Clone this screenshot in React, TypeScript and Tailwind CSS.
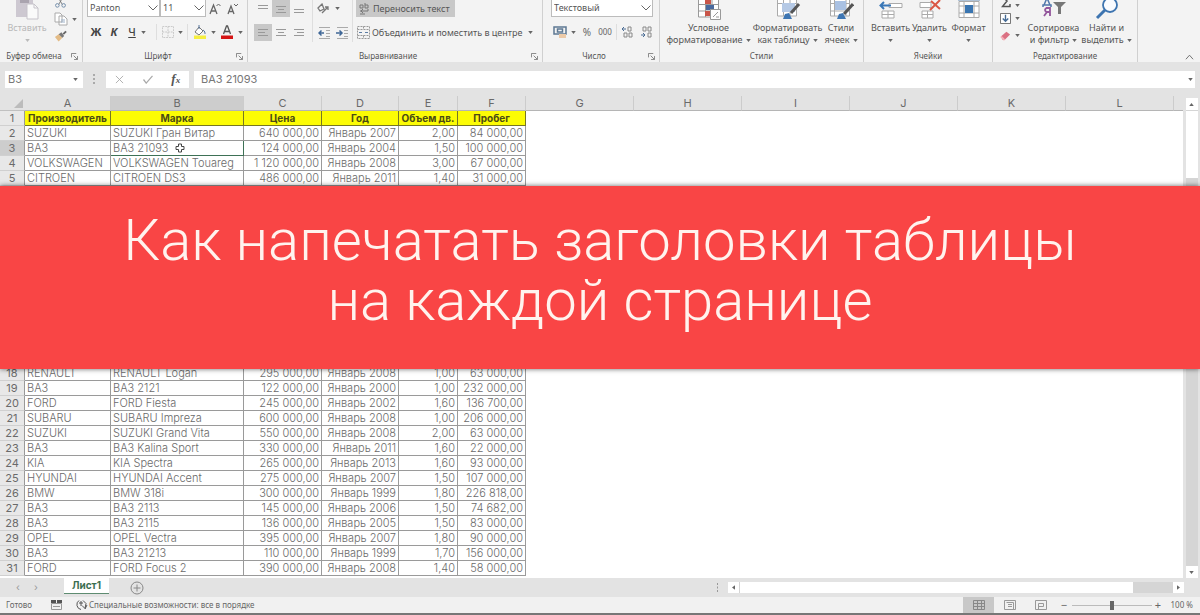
import React from "react";

type Children = { children?: React.ReactNode };

const rows: Record<number, string[]> = {
  2: ["SUZUKI", "SUZUKI Гран Витар", "640 000,00", "Январь 2007", "2,00", "84 000,00"],
  3: ["ВАЗ", "ВАЗ 21093", "124 000,00", "Январь 2004", "1,50", "100 000,00"],
  4: ["VOLKSWAGEN", "VOLKSWAGEN Touareg", "1 120 000,00", "Январь 2008", "3,00", "67 000,00"],
  5: ["CITROEN", "CITROEN DS3", "486 000,00", "Январь 2011", "1,40", "31 000,00"],
  18: ["RENAULT", "RENAULT Logan", "295 000,00", "Январь 2008", "1,00", "63 000,00"],
  19: ["ВАЗ", "ВАЗ 2121", "122 000,00", "Январь 2000", "1,00", "232 000,00"],
  20: ["FORD", "FORD Fiesta", "245 000,00", "Январь 2002", "1,60", "136 700,00"],
  21: ["SUBARU", "SUBARU Impreza", "600 000,00", "Январь 2008", "1,00", "206 000,00"],
  22: ["SUZUKI", "SUZUKI Grand Vita", "550 000,00", "Январь 2008", "2,00", "63 000,00"],
  23: ["ВАЗ", "ВАЗ Kalina Sport", "330 000,00", "Январь 2011", "1,60", "22 000,00"],
  24: ["KIA", "KIA Spectra", "265 000,00", "Январь 2013", "1,60", "93 000,00"],
  25: ["HYUNDAI", "HYUNDAI Accent", "275 000,00", "Январь 2007", "1,50", "107 000,00"],
  26: ["BMW", "BMW 318i", "300 000,00", "Январь 1999", "1,80", "226 818,00"],
  27: ["ВАЗ", "ВАЗ 2113", "145 000,00", "Январь 2006", "1,50", "74 682,00"],
  28: ["ВАЗ", "ВАЗ 2115", "136 000,00", "Январь 2005", "1,50", "83 000,00"],
  29: ["OPEL", "OPEL Vectra", "395 000,00", "Январь 2007", "1,80", "90 000,00"],
  30: ["ВАЗ", "ВАЗ 21213", "110 000,00", "Январь 1999", "1,70", "156 000,00"],
  31: ["FORD", "FORD Focus 2", "390 000,00", "Январь 2008", "1,40", "58 000,00"],
};
const titles = ["Производитель", "Марка", "Цена", "Год", "Объем дв.", "Пробег"];
const letters = ["A", "B", "C", "D", "E", "F", "G", "H", "I", "J", "K", "L"];
const emptyRow = ["", "", "", "", "", ""];

const Caret = () => (
  <svg viewBox="0 0 6 4" className="inline-block h-[3px] w-[5px] shrink-0 fill-[#666]"><path d="M0 0h6L3 4z" /></svg>
);

const Divider = () => <span className="mx-[2px] h-4 w-px shrink-0 bg-[#dedede]" />;

function Group({ label, width, launcher, inset = "", children }: Children & { label: string; width: string; launcher?: boolean; inset?: string }) {
  return (
    <section className={`relative flex h-[62px] shrink-0 flex-col border-r border-[#d0d0d0] ${width}`} aria-label={label}>
      <div className={`flex h-[50px] ${inset}`}>{children}</div>
      <div className={`text-center text-[8px] leading-3 text-[#555] ${launcher ? "pr-[14px]" : ""}`}>{label}</div>
      {launcher && (
        <button aria-label={`${label}: параметры`} className="absolute right-1 bottom-[2px]">
          <svg viewBox="0 0 8 8" className="h-[7px] w-[7px] fill-none stroke-[#777]"><path d="M.5 5V.5H6M3 3l4 4M7.500 3.500v4h-4" /></svg>
        </button>
      )}
    </section>
  );
}

function Select({ label, value, width }: { label: string; value: string; width: string }) {
  return (
    <span className={`relative block ${width}`}>
      <select aria-label={label} defaultValue={value} className="block h-[17px] w-full appearance-none border border-t-0 border-[#bcbcbc] bg-white pl-[2px] text-[9px] leading-3 text-[#555] outline-none">
        <option>{value}</option>
      </select>
      <svg viewBox="0 0 10 6" className="pointer-events-none absolute top-[5px] right-[2px] h-[6px] w-[10px] fill-none stroke-[#666]"><path d="M.5.5 5 5 9.500.5" /></svg>
    </span>
  );
}

function Tool({ label, active, width = "w-[18px]", children }: Children & { label: string; active?: boolean; width?: string }) {
  return (
    <button aria-label={label} className={`flex h-[17px] shrink-0 items-center justify-center gap-1 ${width} ${active ? "bg-[#c8c8c8]" : ""}`}>
      {children}
    </button>
  );
}

function BigButton({ lines, width, icon }: { lines: string[]; width: string; icon: React.ReactNode }) {
  return (
    <button className={`flex shrink-0 flex-col items-center text-[9px] leading-3 whitespace-nowrap text-[#555] ${width}`}>
      <span className="mb-[2px] block h-5">{icon}</span>
      <span>{lines[0]}</span>
      <span className="flex items-center gap-[3px]">{lines[1]}<span className="flex h-3 items-center"><Caret /></span></span>
    </button>
  );
}

const Lines = ({ d }: { d: string }) => (
  <svg viewBox="0 0 12 10" className="h-[10px] w-3 fill-none stroke-[#999]"><path d={d} /></svg>
);

const Indent = ({ out }: { out?: boolean }) => (
  <svg viewBox="0 0 13 12" className="h-3 w-[13px] fill-none stroke-[#aaa]">
    <path d="M1 .5h11M8 3.500h4M8 6.500h4M8 9.500h4M1 11.500h11" />
    <path d={out ? "M1 6h5M3.500 3.500 1 6l2.500 2.500" : "M0 6h5M3.500 3.500 6 6 3.500 8.500"} className="stroke-[#3f6797]" strokeWidth="1.500" />
  </svg>
);

function Ribbon() {
  return (
    <header className="flex h-[62px] overflow-hidden bg-[#f3f3f3]">
      <Group label="Буфер обмена" width="w-[83px]" launcher>
        <button className="flex w-[54px] shrink-0 flex-col items-center text-[9px] leading-3 text-[#b8b8b8]">
          <svg viewBox="0 0 24 20" className="mb-[2px] h-5 w-6">
            <path d="M1 0h17v17H1z" fill="#cdc8d1" /><path d="M5 0h9v3H5z" fill="#aaa4af" />
            <path d="M12 4h7l4 4v11H12z" fill="#fafafa" stroke="#c6c3ca" /><path d="M19 4v4h4" fill="none" stroke="#c6c3ca" />
          </svg>
          <span>Вставить</span>
          <span className="flex h-3 items-center opacity-40"><Caret /></span>
        </button>
        <div className="flex w-6 shrink-0 flex-col">
          <button aria-label="Вырезать" className="h-[9px] w-[6px]">
            <svg viewBox="0 0 14 10" className="h-[9px] w-[13px] fill-none stroke-[#6b87a5]"><path d="m5-2 4 7M9-2 5 5" stroke="#777" /><circle cx="3.500" cy="6" r="2" /><circle cx="10.500" cy="6" r="2" /></svg>
          </button>
          <button aria-label="Копировать" className="flex h-5 w-6 items-center gap-1">
            <svg viewBox="0 0 14 14" className="h-[14px] w-[14px] fill-white stroke-[#aaa]"><path d="M1 1h5l2 2v7H1zM5 4h5l3 3v6H5z" /><path d="M7 8h4M7 10h4" stroke="#9bb0c8" /></svg><Caret />
          </button>
          <button aria-label="Формат по образцу" className="h-[14px] w-4">
            <svg viewBox="0 0 14 12" className="h-3 w-[13px]"><path d="m1 7 4-3 4 4-4 4z" fill="#e3bb86" /><path d="m5 4 3-2 3 4-2 2z" fill="#777" /><path d="m10 4 3-3" stroke="#666" strokeWidth="2" /></svg>
          </button>
        </div>
      </Group>

      <Group label="Шрифт" width="w-[165px]" launcher>
        <div className="flex w-full flex-col gap-2 pl-1">
          <div className="flex h-4 items-start">
            <Select label="Шрифт" value="Panton" width="w-[73px]" />
            <Select label="Размер шрифта" value="11" width="w-[46px]" />
            <Tool label="Увеличить размер">
              <svg viewBox="0 0 12 12" className="h-3 w-3 fill-none stroke-[#666]"><path d="m1 11 3.500-9L8 11M2.500 8h4" strokeWidth="1.300" /><path d="m7.500 3 2-2 2 2" /></svg>
            </Tool>
            <Tool label="Уменьшить размер">
              <svg viewBox="0 0 12 12" className="h-3 w-3 fill-none stroke-[#666]"><path d="m1 11 3-8 3 8M2.500 8.500h3" strokeWidth="1.300" /><path d="m7 1 2 2 2-2" /></svg>
            </Tool>
          </div>
          <div className="flex h-4 items-center text-[11px] font-bold text-[#444]">
            <Tool label="Полужирный">Ж</Tool>
            <Tool label="Курсив"><i>К</i></Tool>
            <Tool label="Подчеркнутый"><span className="font-medium underline">Ч</span></Tool>
            <Caret />
            <span className="w-2" />
            <Divider />
            <Tool label="Границы" width="w-[26px]">
              <svg viewBox="0 0 13 13" className="h-3 w-3 fill-none stroke-[#c4c4c4]"><path d="M.5.5h12v12H.5zM6.500.5v12M.5 6.500h12" strokeDasharray="2 1" /></svg><Caret />
            </Tool>
            <Divider />
            <Tool label="Цвет заливки" width="w-[28px]">
              <svg viewBox="0 0 14 14" className="h-[14px] w-[14px]"><path d="M1 10.500h12V14H1z" fill="#f6ef40" /><path d="m6 2 4 4-4 4-4-3z" fill="#fff" stroke="#777" /><path d="M6 4V0M10 5c2 1 2 3 2 4" fill="none" stroke="#56759c" /></svg><Caret />
            </Tool>
            <Tool label="Цвет шрифта" width="w-[27px]">
              <svg viewBox="0 0 14 14" className="h-[14px] w-[14px]"><path d="M1 10.500h12V14H1z" fill="#d51515" /><path d="m3.500 9 3-8h1l3 8M4.500 6.500h5" fill="none" stroke="#555" strokeWidth="1.300" /></svg><Caret />
            </Tool>
          </div>
        </div>
      </Group>

      <Group label="Выравнивание" width="w-[295px]" launcher>
        <div className="flex shrink-0 flex-col gap-[7px] pl-[6px]">
          <div className="flex">
            <Tool label="По верхнему краю"><Lines d="M1 1.500h10M1 4.500h10" /></Tool>
            <Tool label="По середине" active><Lines d="M1 2.500h10M3 5.500h6M1 8.500h10" /></Tool>
            <Tool label="По нижнему краю"><Lines d="M1 5.500h10M1 8.500h10" /></Tool>
          </div>
          <div className="flex">
            <Tool label="По левому краю" active><Lines d="M1 1.500h10M1 4.500h7M1 7.500h10" /></Tool>
            <Tool label="По центру"><Lines d="M1 1.500h10M3 4.500h6M1 7.500h10" /></Tool>
            <Tool label="По правому краю"><Lines d="M1 1.500h10M4 4.500h7M1 7.500h10" /></Tool>
          </div>
        </div>
        <div className="ml-1 h-[42px] w-px bg-[#dedede]" />
        <div className="flex shrink-0 flex-col gap-[7px] pl-[2px]">
          <Tool label="Ориентация" width="w-[26px]">
            <svg viewBox="0 0 14 12" className="h-3 w-[14px] fill-none stroke-[#777]"><path d="m1 5 4-4 2 5-4 2zM5 10l6-6M11 7V4H8" strokeWidth="1.300" /></svg><Caret />
          </Tool>
          <div className="flex">
            <Tool label="Уменьшить отступ"><Indent out /></Tool>
            <Tool label="Увеличить отступ"><Indent /></Tool>
          </div>
        </div>
        <div className="ml-[1px] h-[42px] w-px bg-[#dedede]" />
        <div className="flex shrink-0 flex-col items-start gap-[7px] pl-[3px] text-[9px] whitespace-nowrap text-[#555]">
          <button className="flex h-[17px] w-[99px] items-center gap-[3px] bg-[#c8c8c8] pl-[3px]">
            <svg viewBox="0 0 11 12" className="h-3 w-[11px] fill-none stroke-[#777]"><path d="M1 2h3v3H1zM6 0v5h3V2H6M1 8h8V6M4 6 2 8l2 2M1 11h5" /></svg>
            Переносить текст
          </button>
          <button className="flex h-[17px] items-center gap-[2px] pl-[1px]">
            <svg viewBox="0 0 13 13" className="h-[13px] w-[13px] fill-none stroke-[#999]"><path d="M.5.5h12v12H.5zM.5 3.500h12M.5 9.500h12M6.500.5v3M6.500 9.500v3" strokeDasharray="2 1" /><path d="M2 6.500h3M11 6.500H8" stroke="#5d7da3" /></svg>
            Объединить и поместить в центре
            <span className="ml-1 flex"><Caret /></span>
          </button>
        </div>
      </Group>

      <Group label="Число" width="w-[117px]" launcher>
        <div className="flex w-full flex-col gap-2 pl-2">
          <div className="h-4"><Select label="Числовой формат" value="Текстовый" width="w-[102px]" /></div>
          <div className="flex h-4 items-center text-[10px] text-[#666]">
            <Tool label="Финансовый формат" width="w-[27px]">
              <svg viewBox="0 0 14 13" className="h-[13px] w-[14px] fill-none"><path d="M1 1h12v7H1zM4.500 3v3h5V3z" stroke="#5d7893" strokeWidth="1.500" /><path d="M6 8h7v4H6z" fill="#eccaa8" /></svg><Caret />
            </Tool>
            <Tool label="Процентный формат">%</Tool>
            <Tool label="Формат с разделителями"><span className="text-[8px]">000</span></Tool>
            <Divider />
            <Tool label="Увеличить разрядность"><svg viewBox="0 0 12 12" className="h-3 w-3 fill-none stroke-[#888]"><path d="M0 3h4M2 1 0 3l2 2" stroke="#4b6c94" /><path d="M6 1h3v4H6zM2 7h3v4H2zM7 7h3v4H7z" /></svg></Tool>
            <Tool label="Уменьшить разрядность"><svg viewBox="0 0 12 12" className="h-3 w-3 fill-none stroke-[#888]"><path d="M1 9h4M3 7l2 2-2 2" stroke="#4b6c94" /><path d="M3 1h3v4H3zM8 1h3v4H8zM8 7h3v4H8z" /></svg></Tool>
          </div>
        </div>
      </Group>

      <Group label="Стили" width="w-[204px]" inset="pl-[5px]">
        <BigButton width="w-[87px]" lines={["Условное", "форматирование"]} icon={
          <svg viewBox="0 0 26 20" className="h-5 w-[26px] fill-white stroke-[#999]"><path d="M2.500-2v19h20V-2M2.500 4.500h20M2.500 11h20M9.500-2v19M16-2v19" /><path d="M9 0h6v4H9zM9 11h5v5H9z" fill="#c95549" stroke="none" /><path d="M10 5h8v5h-8z" fill="#49699e" stroke="none" /><path d="M14.500 9.500h10v10h-10z" /><path d="m17 17 5-5M20 17h3" /></svg>} />
        <BigButton width="w-[71px]" lines={["Форматировать", "как таблицу"]} icon={
          <svg viewBox="0 0 26 20" className="h-5 w-[26px] fill-white stroke-[#aaa]"><path d="M2.500-2v18h19V-2M2.500 3.500h19M8.500-2v18M15-2v18" /><path d="M7 3h13v9H7z" fill="#b5c9e5" stroke="none" /><path d="m16 13 8-9" stroke="#555" strokeWidth="3" /><path d="m8 19 2-5 4-1 3 6z" fill="#3e76b3" stroke="none" /></svg>} />
        <BigButton width="w-[36px]" lines={["Стили", "ячеек"]} icon={
          <svg viewBox="0 0 26 20" className="h-5 w-[26px] fill-white stroke-[#aaa]"><path d="M2.500-2v18h19V-2M2.500 3.500h19M2.500 11h19M6.500-2v18M18-2v18" /><path d="M7 1h11v9H7z" fill="#a9c1e3" stroke="none" /><path d="m16 14 9-10" stroke="#555" strokeWidth="3" /><path d="m9 19 2-5 4-1 3 6z" fill="#3e76b3" stroke="none" /></svg>} />
      </Group>

      <Group label="Ячейки" width="w-[129px]" inset="pl-[7px]">
        <BigButton width="w-[39px]" lines={["Вставить", ""]} icon={
          <svg viewBox="0 0 24 20" className="h-5 w-6 fill-white stroke-[#aaa]"><path d="M10 3.500h13v4H10zM3 11h12v7H3zM9 11v7M3 14.500h12" /><path d="M2 5.500h10M5 2 1.500 5.500 5 9" fill="none" stroke="#3977b7" strokeWidth="2" /></svg>} />
        <BigButton width="w-[39px]" lines={["Удалить", ""]} icon={
          <svg viewBox="0 0 24 20" className="h-5 w-6 fill-white stroke-[#aaa]"><path d="M2 2.500h11v5H2zM4 11h11v7H4zM9.500 11v7M4 14.500h11" /><path d="m13 1 9 8M22 0 12 10" stroke="#da5744" strokeWidth="2" /></svg>} />
        <BigButton width="w-[39px]" lines={["Формат", ""]} icon={
          <svg viewBox="0 0 24 20" className="h-5 w-6 fill-white stroke-[#aaa]"><path d="M2 1.500h20v16H2zM7 1.500v16M17 1.500v16M2 6h20M2 13h20" /><path d="M8 5h8v8H8z" fill="#3975b1" stroke="none" /><path d="M1 0h22" stroke="#6c91ba" /></svg>} />
      </Group>

      <Group label="Редактирование" width="w-[145px]" inset="pl-[7px]">
        <div className="flex w-[27px] shrink-0 flex-col items-start">
          <Tool label="Сумма" width="w-5 max-h-[10px]"><svg viewBox="0 0 10 10" className="h-[10px] w-[10px] fill-none stroke-[#555]"><path d="M4-1 6 1 1.500 6.500H9V4" strokeWidth="1.500" /></svg><Caret /></Tool>
          <Tool label="Заполнить" width="w-5"><svg viewBox="0 0 12 12" className="h-[11px] w-[11px] fill-white stroke-[#666]"><path d="M.5.5h11v11H.5z" /><path d="M6 2v7M3 6l3 3 3-3" stroke="#456b95" strokeWidth="1.500" /></svg><Caret /></Tool>
          <Tool label="Очистить" width="w-5"><svg viewBox="0 0 12 12" className="h-[11px] w-[11px]"><path d="m1 7 6-5 4 3-6 6H3z" fill="#db7183" /><path d="m1 7 4 4" stroke="#f5b0b8" strokeWidth="2" /></svg><Caret /></Tool>
        </div>
        <BigButton width="w-[53px]" lines={["Сортировка", "и фильтр"]} icon={
          <svg viewBox="0 0 26 20" className="h-5 w-[26px] fill-none"><path d="m3 5 3-7 3 7M2 7V5h8v2" stroke="#4f77ab" strokeWidth="1.500" /><path d="M9 16V8H5.500q-3 2 0 4H9M6 12l-3 4" stroke="#93569c" strokeWidth="1.800" /><path d="M12 2h13l-5 5v7h-3V7z" fill="#777" /></svg>} />
        <BigButton width="w-[53px]" lines={["Найти и", "выделить"]} icon={
          <svg viewBox="0 0 26 20" className="h-5 w-[26px] fill-none stroke-[#3d74b0]"><circle cx="16" cy="5" r="7" fill="#f9fbff" strokeWidth="1.800" /><path d="m11 10-8 8" strokeWidth="3" /></svg>} />
      </Group>

      <div className="flex flex-1 items-end justify-end pr-[6px] pb-[2px]">
        <button aria-label="Свернуть ленту"><svg viewBox="0 0 10 6" className="h-[6px] w-[9px] fill-none stroke-[#666]"><path d="M1 5.500 5 1l4 4.500" /></svg></button>
      </div>
    </header>
  );
}

function FormulaBar() {
  return (
    <div className="flex h-[34px] items-center gap-[5px] bg-[#e3e3e3] px-[5px] text-[11px] text-[#777]">
      <div className="flex h-[17px] w-[78px] items-center bg-white pr-[5px] pl-[3px]">
        <input aria-label="Имя ячейки" defaultValue="B3" className="min-w-0 flex-1 outline-none" />
        <Caret />
      </div>
      <svg viewBox="0 0 4 10" className="mr-[5px] ml-1 h-[10px] w-1 fill-[#aaa]"><path d="M1 0h2v2H1zM1 4h2v2H1zM1 8h2v2H1z" /></svg>
      <div className="flex h-[17px] w-[83px] items-center justify-around bg-white">
        <button aria-label="Отмена"><svg viewBox="0 0 10 10" className="h-[9px] w-[9px] stroke-[#aaa]"><path d="m1 1 8 8M9 1 1 9" /></svg></button>
        <button aria-label="Ввод"><svg viewBox="0 0 12 10" className="h-[9px] w-3 fill-none stroke-[#aaa]"><path d="m1 5 3 4 7-8" strokeWidth="1.400" /></svg></button>
        <button aria-label="Вставить функцию" className="font-['Liberation_Serif',serif] text-[13px] leading-4 font-bold text-[#555] italic">f<span className="text-[9px]">x</span></button>
      </div>
      <div className="flex h-[17px] min-w-0 flex-1 items-center bg-white pr-[2px] pl-[7px]">
        <input aria-label="Строка формул" defaultValue="ВАЗ 21093" className="min-w-0 flex-1 outline-none" />
        <Caret />
      </div>
    </div>
  );
}

function Sheet() {
  return (
    <main className="flex flex-1 bg-[#e3e3e3]">
      <div className="min-w-0 flex-1 overflow-hidden bg-white pb-[2px]">
        <table className="w-full table-fixed border-separate border-spacing-0 text-[11px] leading-[14px] text-[#6a6a6a]">
          <colgroup>
            <col className="w-[25px]" /><col className="w-[86px]" /><col className="w-[133px]" /><col className="w-[78px]" />
            <col className="w-[77px]" /><col className="w-[59px]" /><col className="w-[68px]" />
            {letters.slice(6).map((l) => <col key={l} className="w-[108px]" />)}
            <col />
          </colgroup>
          <thead>
            <tr>
              <th className="border-b border-[#c0c0c0] bg-[#e3e3e3] p-0">
                <svg viewBox="0 0 10 10" className="ml-auto mr-[2px] h-[9px] w-[9px] fill-[#bcbcbc]"><path d="M10 0v10H0z" /></svg>
              </th>
              {letters.map((l) => (
                <th key={l} scope="col" className={`h-[15px] border-r border-b border-r-[#cccccc] border-b-[#b5b5b5] p-0 font-normal ${l === "B" ? "bg-[#cdcdcd]" : "bg-[#e3e3e3]"}`}>{l}</th>
              ))}
              <th className="border-b border-[#b5b5b5] bg-[#e3e3e3] p-0" />
            </tr>
          </thead>
          <tbody>
            {Array.from({ length: 31 }, (_, i) => i + 1).map((n) => (
              <tr key={n}>
                <th scope="row" className={`h-[15px] border-r border-b border-r-[#999] border-b-[#d0d0d0] p-0 font-normal ${n === 3 ? "bg-[#cdcdcd]" : "bg-[#e8e8e8]"}`}>{n}</th>
                {n === 1
                  ? titles.map((t) => <td key={t} className="overflow-hidden border-r border-b border-[#777722] bg-[#fcfc05] p-0 text-center text-[10px] font-bold whitespace-nowrap text-[#4b4b14]">{t}</td>)
                  : (rows[n] ?? emptyRow).map((v, c) => (
                    <td key={c} className={`border-r border-b px-[2px] py-0 font-light whitespace-nowrap ${c > 1 ? "text-right" : ""} ${n === 3 && c === 1 ? "border-[#3e7156]" : "border-[#9a9a9a]"}`}>
                      {v}
                      {n === 3 && c === 1 && (
                        <svg viewBox="0 0 10 10" className="ml-[7px] inline-block h-[10px] w-[10px] fill-white stroke-[#444] align-[-1px]"><path d="M3.500 1h3v2.500H9v3H6.500V9h-3V6.500H1v-3h2.500z" /></svg>
                      )}
                    </td>
                  ))}
              </tr>
            ))}
          </tbody>
        </table>
      </div>
      <div className="flex w-[17px] flex-col items-center pt-[2px]">
        <button aria-label="Вверх" className="flex h-3 w-3 items-center justify-center bg-white"><span className="flex rotate-180"><Caret /></span></button>
        <div className="w-3 flex-1 bg-[#d5d5d5] pt-px"><div className="h-[67px] bg-white" /></div>
        <button aria-label="Вниз" className="flex h-3 w-3 items-center justify-center bg-white"><Caret /></button>
      </div>
    </main>
  );
}

function SheetTabs() {
  return (
    <nav className="flex h-[19px] items-center bg-[#e3e3e3] text-[#999]">
      <button aria-label="Предыдущий лист" className="ml-4 w-[18px] text-left text-[10px]">‹</button>
      <button aria-label="Следующий лист" className="w-[30px] text-left text-[10px]">›</button>
      <button className="h-4 w-[45px] self-start border-b border-[#5e8c71] bg-white text-[10px] font-bold text-[#3b6e50]">Лист1</button>
      <button aria-label="Новый лист" className="ml-[21px]">
        <svg viewBox="0 0 14 14" className="h-[14px] w-[14px] fill-none stroke-[#888]"><circle cx="7" cy="7" r="6" /><path d="M7 3.500v7M3.500 7h7" /></svg>
      </button>
      <div className="flex-1" />
      <svg viewBox="0 0 3 9" className="mr-[9px] h-[9px] w-[3px] fill-[#999]"><path d="M1 0h1v2H1zM1 3.500h1v2H1zM1 7h1v2H1z" /></svg>
      <div className="mr-4 flex h-[11px] w-[38%] items-stretch bg-[#d5d5d5]">
        <button aria-label="Влево" className="flex w-[11px] items-center justify-center bg-white"><span className="flex rotate-90"><Caret /></span></button>
        <div className="ml-px w-[393px] bg-white" />
        <div className="flex-1" />
        <button aria-label="Вправо" className="flex w-[11px] items-center justify-center bg-white"><span className="flex -rotate-90"><Caret /></span></button>
      </div>
    </nav>
  );
}

function StatusBar() {
  return (
    <footer className="flex h-[18px] items-center border-b-2 border-[#777] bg-[#f1f1f1] text-[8px] text-[#666]">
      <span className="w-[46px] pl-[6px]">Готово</span>
      <svg viewBox="0 0 11 10" className="ml-[5px] h-[10px] w-[11px] fill-none stroke-[#999]"><path d="M.5 3.500h10v6H.5zM2 6.500h7" /><path d="M0 0h5v3H0zM6 0h5v3H6z" fill="#555" stroke="none" /></svg>
      <button className="ml-[13px] flex items-center gap-[1px] whitespace-nowrap">
        <svg viewBox="0 0 13 12" className="h-3 w-[13px] fill-none stroke-[#555]"><path d="M4 1.500a5 5 0 0 0 2 9M8 1.500l3 3-1 5-3-3M10 10l2-4M4 4h4M6 2v5" /></svg>
        Специальные возможности: все в порядке
      </button>
      <div className="flex-1" />
      <button aria-label="Обычный" className="flex h-4 w-[31px] items-center justify-center bg-[#c8c8c8]"><svg viewBox="0 0 12 10" className="h-[10px] w-3 fill-none stroke-[#888]"><path d="M.5.5h11v9H.5zM.5 3.500h11M.5 6.500h11M4.500.5v9M8.500.5v9" /></svg></button>
      <button aria-label="Разметка страницы" className="flex w-[31px] justify-center"><svg viewBox="0 0 12 10" className="h-[10px] w-3 fill-none stroke-[#999]"><path d="M.5.5h11v9H.5zM2.500 2.500h7v7h-7M4 4.500h4M4 6.500h4" /></svg></button>
      <button aria-label="Страничный" className="flex w-[31px] justify-center"><svg viewBox="0 0 12 10" className="h-[10px] w-3 fill-none stroke-[#999]"><path d="M.5.5h11v9H.5zM3.500 9.500v-6h5v3h-5" /></svg></button>
      <button aria-label="Уменьшить" className="w-4 text-center text-[11px] leading-3">−</button>
      <input aria-label="Масштаб" type="range" defaultValue={50} className="h-3 w-20 appearance-none bg-transparent [&::-webkit-slider-runnable-track]:h-px [&::-webkit-slider-runnable-track]:bg-[#bbb] [&::-webkit-slider-thumb]:-mt-1 [&::-webkit-slider-thumb]:h-[9px] [&::-webkit-slider-thumb]:w-1 [&::-webkit-slider-thumb]:appearance-none [&::-webkit-slider-thumb]:bg-[#666]" />
      <button aria-label="Увеличить" className="w-3 text-center text-[11px] leading-3">+</button>
      <span className="w-[36px] pr-[7px] text-right whitespace-nowrap">100 %</span>
    </footer>
  );
}

export default function App() {
  return (
    <div className="relative flex min-h-screen flex-col overflow-hidden bg-white font-['Noto_Sans','Open_Sans',sans-serif]">
      <Ribbon />
      <div className="flex flex-1 flex-col font-['Inter',sans-serif]">
        <FormulaBar />
        <Sheet />
        <SheetTabs />
      </div>
      <StatusBar />
      <div className="absolute inset-x-0 top-[186px] flex h-[183px] items-center justify-center bg-[#f94545] pb-4 shadow-[0_0_5px_rgba(0,0,0,0.6)]">
        <h1 className="text-center font-['Roboto',sans-serif] text-[58px] leading-[60px] font-light text-[#fff3ee]">
          <span className="block">Как напечатать заголовки таблицы</span>
          <span className="block">на каждой странице</span>
        </h1>
      </div>
    </div>
  );
}
